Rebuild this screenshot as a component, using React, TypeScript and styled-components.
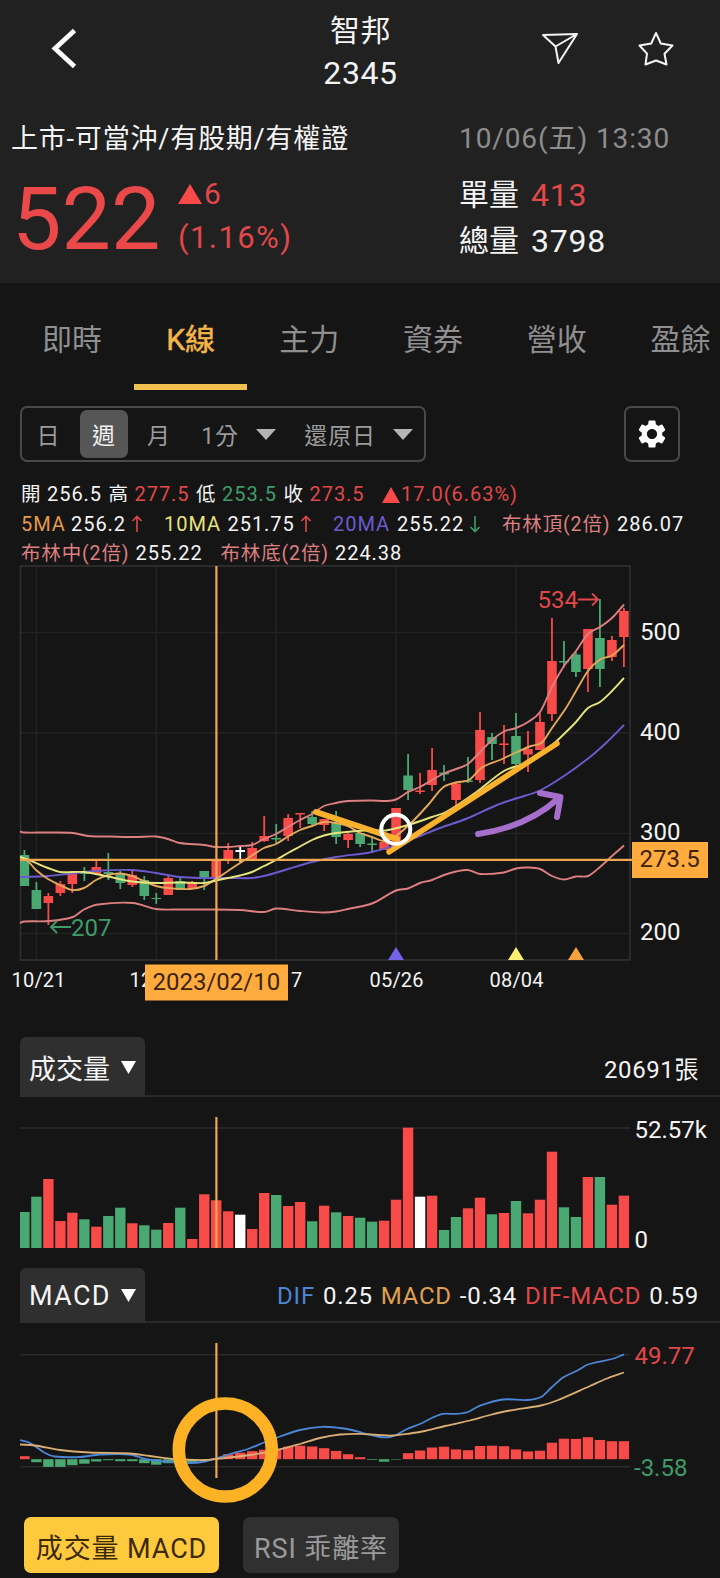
import React from "react";
import styled, { createGlobalStyle } from "styled-components";
import { MdSettings } from "react-icons/md";

const RED = "#f84a48";
const RED_TEXT = "#e0484a";
const GREEN = "#4aa873";
const GREEN_TEXT = "#3f9b68";
const ORANGE = "#efa850";
const PINK = "#dd7f80";
const YELLOW = "#e6e47c";
const PURPLE = "#6c5bd0";
const BLUE = "#4c86d6";
const WHITE = "#f4f4f4";

const GlobalStyle = createGlobalStyle`
  * { box-sizing: border-box; }
  body {
    margin: 0;
    background: #151515;
    color: ${WHITE};
    font-family: Roboto, "Noto Sans CJK TC", sans-serif;
  }
  svg { display: block; flex: none; }
`;

const Screen = styled.div`
  width: 720px;
  height: 1578px;
  overflow: hidden;
  background: #151515;
`;

const Header = styled.header`
  height: 283px;
  background: #212121;
`;

const TitleBar = styled.div`
  display: grid;
  grid-template-columns: 1fr auto 1fr;
  align-items: start;
  height: 118px;
  padding: 9px 45px 0 50px;
`;

const BackButton = styled.div`
  padding-top: 19px;
`;

const Title = styled.h1`
  margin: 0 4px 0 0;
  font-size: 30px;
  font-weight: 400;
  line-height: 43px;
  letter-spacing: 0.6px;
  text-align: center;
`;

const TitleCode = styled.div`
  font-size: 32px;
  letter-spacing: 0.6px;
`;

const Actions = styled.div`
  display: flex;
  justify-content: flex-end;
  gap: 56px;
  padding-top: 20px;
`;

const Quote = styled.div`
  display: grid;
  grid-template-columns: 448px 1fr;
  padding-left: 11px;
`;

const Market = styled.div`
  font-size: 27px;
  line-height: 42px;
  letter-spacing: 0.8px;
`;

const Stamp = styled(Market)`
  color: #8d8d8d;
  font-size: 28px;
  letter-spacing: 0.9px;
`;

const PriceRow = styled.div`
  display: flex;
  gap: 22px;
  padding: 11px 0 0 1px;
`;

const Price = styled.div`
  width: 144px;
  color: #ea4849;
  font-size: 88px;
  line-height: 95px;
`;

const Stack = styled.div<{ $color?: string }>`
  display: flex;
  flex-direction: column;
  color: ${(p) => p.$color ?? WHITE};
  font-size: 30px;
  line-height: 46px;
`;

const Line = styled.div<{ $spacing?: number; $size?: number; $height?: number }>`
  display: flex;
  align-items: center;
  gap: 2px;
  height: ${(p) => p.$height ?? 46}px;
  font-size: ${(p) => p.$size ?? 30}px;
  letter-spacing: ${(p) => p.$spacing ?? 0}px;
`;

const Volumes = styled(Stack)`
  padding-top: 11.5px;
`;

const Figure = styled.span<{ $color?: string }>`
  margin-left: 10px;
  color: ${(p) => p.$color ?? WHITE};
  font-size: 32px;
  letter-spacing: 0.8px;
`;

const Tabs = styled.nav`
  display: flex;
  height: 107px;
  padding-left: 10px;
`;

const Tab = styled.div<{ $active?: boolean }>`
  flex: none;
  width: ${(p) => (p.$active ? 113.5 : 123.8)}px;
  border-bottom: ${(p) => (p.$active ? "6px solid #f2c04e" : "6px solid transparent")};
  color: ${(p) => (p.$active ? "#f4b548" : "#8f8f8f")};
  -webkit-text-stroke: ${(p) => (p.$active ? "0.5px #f4b548" : "0")};
  font-size: 30px;
  line-height: 114px;
  text-align: center;
  white-space: nowrap;
`;

const Toolbar = styled.div`
  display: flex;
  justify-content: space-between;
  padding: 16px 40px 0 20px;
`;

const Frame = styled.div<{ $width: number }>`
  display: flex;
  align-items: center;
  width: ${(p) => p.$width}px;
  height: 56px;
  border: 2px solid #494949;
  border-radius: 7px;
`;

const IconFrame = styled(Frame)`
  justify-content: center;
  color: white;
`;

const Period = styled.div<{ $width: number; $active?: boolean; $end?: boolean; $nudge?: number }>`
  display: flex;
  align-items: center;
  justify-content: ${(p) => (p.$end ? "flex-end" : "center")};
  gap: 17px;
  width: ${(p) => p.$width}px;
  height: 48px;
  padding-right: ${(p) => p.$nudge ?? 0}px;
  border-radius: 7px;
  background: ${(p) => (p.$active ? "#565656" : "transparent")};
  color: ${(p) => (p.$active ? "#f0f0f0" : "#9b9b9b")};
  font-size: 23px;
  letter-spacing: 0.9px;
`;

const Legend = styled.div`
  height: 86px;
  margin: 17px 0 0 21px;
  padding-top: 1px;
  font-size: 20px;
  letter-spacing: 0.8px;
`;

const LegendRow = styled.div`
  display: flex;
  align-items: center;
  height: 29.4px;
  line-height: 29px;
  white-space: nowrap;
`;

const Item = styled.span<{ $color?: string; $width: number; $cjk?: boolean }>`
  display: flex;
  align-items: center;
  flex: none;
  gap: 1px;
  width: ${(p) => p.$width}px;
  color: ${(p) => p.$color ?? WHITE};
  font-size: ${(p) => (p.$cjk ? 19.5 : 20)}px;
  letter-spacing: ${(p) => (p.$cjk ? 0.85 : 0.95)}px;
`;

const PanelHeader = styled.div<{ $height: number; $top?: number }>`
  display: flex;
  justify-content: space-between;
  height: ${(p) => p.$height}px;
  margin-top: ${(p) => p.$top ?? 0}px;
  margin-left: 20px;
  padding-right: 21px;
  border-bottom: 2px solid #2a2a2a;
`;

const PanelTab = styled.div<{ $spacing?: number }>`
  display: flex;
  align-items: center;
  justify-content: space-between;
  width: 125px;
  padding: 0 9px;
  margin-bottom: -2px;
  border-radius: 6px 6px 0 0;
  background: #2f2f2f;
  font-size: 27px;
  letter-spacing: ${(p) => p.$spacing ?? 0}px;
`;

const Readout = styled.div<{ $spacing: number }>`
  display: flex;
  align-items: center;
  gap: 8px;
  padding-top: 2px;
  font-size: 24px;
  letter-spacing: ${(p) => p.$spacing}px;
`;

const Tint = styled.span<{ $color: string }>`
  color: ${(p) => p.$color};
`;

const ChartText = styled.text<{ $color?: string }>`
  font-family: Roboto, sans-serif;
  font-size: 24px;
  fill: ${(p) => p.$color ?? WHITE};
`;

const DateText = styled(ChartText)`
  font-size: 20px;
  letter-spacing: 0.2px;
`;

const Footer = styled.div`
  display: flex;
  gap: 24px;
  padding: 14px 0 0 24px;
`;

const Preset = styled.div<{ $width: number; $active?: boolean }>`
  display: flex;
  align-items: center;
  justify-content: center;
  width: ${(p) => p.$width}px;
  height: 56px;
  padding: 2px 0 0;
  border-radius: 7px;
  background: ${(p) => (p.$active ? "#ffc93d" : "#303030")};
  color: ${(p) => (p.$active ? "#3a2a08" : "#9a9a9a")};
  font-size: 27px;
  letter-spacing: 0.9px;
  white-space: nowrap;
`;

const Triangle = ({ w, h, color, up }: { w: number; h: number; color: string; up?: boolean }) => (
  <svg width={w} height={h} viewBox="0 0 10 10" preserveAspectRatio="none">
    <polygon points={up ? "5,0 10,10 0,10" : "0,0 10,0 5,10"} fill={color} />
  </svg>
);

const Trend = ({ down }: { down?: boolean }) => (
  <svg width="12" height="18" viewBox="0 0 12 18" fill="none" stroke={down ? GREEN_TEXT : RED_TEXT} strokeWidth="1.6">
    <path d={down ? "M6 1V16M1.5 12L6 16.5L10.5 12" : "M6 17V2M1.5 6L6 1.5L10.5 6"} />
  </svg>
);

// [colour, high, low, body top, body bottom] for each week, on the chart's own scale
type Candle = [string, number, number, number, number];
const candles: Candle[] = [
  ["g", 850, 886, 855, 886], ["g", 882, 909, 890, 909], ["r", 893, 925, 896, 903],
  ["r", 881, 896, 884, 893], ["r", 873, 893, 873, 884], ["g", 867, 881, 872, 874],
  ["r", 861, 874, 867, 874], ["g", 853, 880, 872, 874], ["g", 871, 889, 873, 883],
  ["r", 870, 887, 875, 885], ["g", 876, 900, 880, 896], ["g", 893, 904, 898, 899],
  ["r", 875, 895, 878, 895], ["g", 877, 890, 881, 890], ["r", 881, 888, 882, 888],
  ["g", 871, 890, 871, 878], ["r", 859, 878, 859, 878], ["r", 843, 864, 850, 860],
  ["w", 846, 862, 850, 852], ["r", 842, 859, 848, 859], ["r", 816, 842, 836, 841],
  ["g", 824, 843, 838, 839.5], ["r", 814, 841, 818, 836], ["r", 813, 828, 813, 814.5],
  ["g", 811, 827, 817, 824], ["r", 819, 831, 819, 825], ["g", 811, 844, 823, 837],
  ["r", 833, 848, 834, 840], ["g", 833, 847, 833, 844], ["g", 838, 853, 843.5, 845],
  ["r", 842, 850, 842, 850], ["r", 808, 842, 808, 842], ["g", 754, 800, 775.5, 790],
  ["r", 773, 794, 790.5, 792], ["r", 748, 791, 770, 785], ["g", 765, 781, 772.5, 774.5],
  ["r", 783, 805, 783.5, 800], ["g", 757, 783, 780.5, 782], ["r", 712, 783, 730, 780],
  ["g", 733, 760, 737, 744], ["r", 725, 764, 743.5, 745], ["g", 713, 765, 736, 764],
  ["r", 731, 772, 749, 754.5], ["r", 713, 750, 722, 750], ["r", 618, 721, 661, 714],
  ["g", 641, 667, 661, 662.5], ["g", 652, 677, 654.5, 672], ["r", 629, 692, 629, 669],
  ["g", 599, 687, 638, 669], ["r", 636, 661, 640, 657], ["r", 608, 667, 611, 637],
];

const volumes = [
  36, 51.3, 69, 27, 35.3, 28.7, 21.3, 32, 40.3, 24.7, 22.7, 18.3, 25, 40.3, 9, 53.7, 47.7, 36.7, 33.3, 19, 55, 53,
  42, 46, 26.7, 42.3, 35.7, 32, 30.3, 26.3, 27.3, 48.3, 120.3, 51.3, 52.3, 18, 31, 39.7, 50.3, 33.7, 35, 47, 34.7,
  48.3, 96.3, 40.7, 31, 71, 71, 43.3, 52.3,
];
const volumeTones = "ggrrrgrggrggrgrrrrwrrgrrgrgrggrrrwrggrrgrgrrrggrgrr";

const histogram = [
  3, -3, -7.7, -7.7, -6, -4.5, -2.3, -1, -2, -2, -4, -5.5, -4, -3.5, -3, -1, 1, 5, 6.5, 8, 9.5, 10.5, 12.5, 13.5,
  12.7, 11, 8.3, 5, 2, -0.7, -2.5, -0.5, 6, 8.7, 11.7, 12.5, 9.8, 9, 13.2, 13.5, 13, 9.8, 7.8, 8.5, 16.5, 20.5, 20.3,
  22, 19.2, 18, 18,
];

const tone: Record<string, string> = { r: RED, g: GREEN, w: "#ffffff" };
const cx = (i: number) => 24.4 + i * 11.99;

type Point = [number, number];
const smooth = (pts: Point[]) => {
  let d = `M${pts[0][0]} ${pts[0][1]}`;
  for (let i = 0; i < pts.length - 1; i++) {
    const a = pts[i - 1] ?? pts[i];
    const b = pts[i];
    const c = pts[i + 1];
    const e = pts[i + 2] ?? c;
    const k = (c[0] - b[0]) / 3;
    const sb = (c[1] - a[1]) / (c[0] - a[0]);
    const sc = (e[1] - b[1]) / (e[0] - b[0]);
    d += `C${b[0] + k} ${b[1] + k * sb} ${c[0] - k} ${c[1] - k * sc} ${c[0]} ${c[1]}`;
  }
  return d;
};

const upperBand: Point[] = [
  [20, 831.5], [24, 832.5], [48, 832.5], [73, 833], [88, 836], [110, 836.5], [135, 837], [156, 836.5], [168, 839], [180, 843],
  [204, 845], [216, 847], [228, 847], [240, 846], [252, 845], [264, 839], [276, 834], [288, 827], [300, 820], [312, 814],
  [324, 806], [336, 803], [348, 801], [372, 800.5], [386, 801], [396, 799.5], [408, 792], [420, 787], [432, 780],
  [444, 773.5], [456, 769], [468, 764], [480, 752], [492, 740], [504, 731.5], [516, 728], [528, 722], [540, 712],
  [552, 687], [564, 666], [576, 651], [588, 634], [600, 627], [612, 618], [624, 604.5],
];
const lowerBand: Point[] = [
  [20, 923], [24, 921.5], [50, 921], [73, 917], [84, 909.5], [98, 904.5], [133, 903], [156, 909], [180, 909.5], [204, 909.5],
  [240, 910], [264, 912], [276, 908.5], [300, 911], [324, 912.5], [336, 911.5], [348, 909], [372, 903.5], [396, 890.5],
  [408, 888.5], [420, 883], [432, 880], [444, 875], [456, 871.5], [468, 870], [480, 874], [504, 872.5], [516, 868.5],
  [528, 867.5], [540, 869], [552, 876], [564, 879.5], [576, 876.5], [588, 876], [600, 867], [612, 856], [624, 845.5],
];
const ma5: Point[] = [
  [20, 857], [27, 860], [36, 870], [48, 879], [60, 885], [72, 890], [84, 888], [96, 880], [108, 875], [120, 873.5],
  [132, 876], [144, 881], [156, 886], [168, 888], [190, 889], [204, 886], [216, 879], [228, 871], [240, 863], [252, 855.5],
  [264, 848], [276, 844], [288, 836.5], [300, 830], [312, 826], [324, 822], [336, 823], [348, 826], [360, 833],
  [372, 837], [384, 841], [396, 836], [413, 821], [428, 805], [443, 787.5], [456, 782.5], [469, 780], [482, 767.5],
  [500, 760], [517, 752], [531, 746], [542, 742.5], [552, 728], [566, 708], [576, 691], [588, 671], [600, 659.5],
  [612, 655.5], [624, 645],
];
const ma10: Point[] = [
  [20, 857], [28, 859.5], [36, 863], [48, 868], [60, 872], [84, 872], [108, 876.5], [132, 881.5], [156, 883],
  [180, 882.5], [204, 883], [216, 880.5], [228, 878], [240, 875.5], [252, 872], [264, 866], [276, 860], [288, 853],
  [300, 846.5], [312, 840], [324, 835.5], [336, 833], [372, 830], [386, 830.5], [408, 825], [432, 817], [446, 812],
  [475, 793], [504, 771], [528, 762], [552, 745], [564, 734], [576, 722], [588, 708], [600, 702], [612, 691], [624, 678],
];
const ma20: Point[] = [
  [20, 877], [48, 876], [72, 873.5], [96, 871], [132, 870], [156, 873], [180, 877], [204, 878], [228, 878], [252, 878],
  [268, 875], [288, 869], [312, 862], [336, 857], [372, 852], [396, 845], [420, 836], [440, 828], [467, 818.5], [497, 805],
  [516, 798.5], [540, 790.5], [564, 776], [590, 757], [606, 743], [624, 725],
];
const dif: Point[] = [
  [20, 1440], [30, 1443], [45, 1453], [55, 1456.5], [80, 1457], [100, 1454.5], [130, 1454.5], [145, 1459], [160, 1461],
  [190, 1463], [205, 1461.5], [216, 1458.5], [230, 1454], [248, 1449], [264, 1442.5], [280, 1436.5], [300, 1430], [322, 1426.8],
  [340, 1428], [352, 1430], [363, 1433], [380, 1437], [390, 1437], [398, 1434], [407, 1429], [420, 1424], [433, 1417.5],
  [443, 1413.9], [457, 1413.9], [468, 1412], [480, 1405.7], [503, 1399.5], [527, 1400], [541, 1397], [552, 1387], [563, 1377.5],
  [577, 1370.7], [588, 1364.5], [612, 1359], [624, 1354.3],
];
const macd: Point[] = [
  [20, 1444.5], [35, 1445.5], [60, 1450], [90, 1452.5], [130, 1453.5], [150, 1456], [175, 1459], [205, 1460], [225, 1458],
  [250, 1455], [275, 1450.5], [300, 1444], [320, 1438], [340, 1434.5], [360, 1433.8], [378, 1435], [393, 1435.5],
  [410, 1433.5], [425, 1431], [445, 1426], [470, 1420.5], [490, 1415], [510, 1410.5], [541, 1405.5], [557, 1400.5],
  [590, 1386], [607, 1378.5], [624, 1372.5],
];

const PriceChart = () => (
  <svg width="720" height="440" viewBox="0 565 720 440">
    <g stroke="#232323" strokeWidth="1.5">
      {[632.5, 733, 833.5, 933.5].map((y) => <line key={y} x1="20" x2="630" y1={y} y2={y} />)}
      {[36.4, 156.3, 276.2, 396.1, 516].map((x) => <line key={x} x1={x} x2={x} y1="566" y2="960" />)}
    </g>
    <rect x="20.5" y="566" width="609.5" height="394" fill="none" stroke="#2e2e2e" strokeWidth="1.8" />
    {candles.map(([c, high, low, top, bottom], i) => {
      const left = Math.max(20, cx(i) - 4.8);
      return (
        <g key={i} fill={tone[c]}>
          <rect x={cx(i) - 0.9} y={high} width="1.8" height={low - high} />
          <rect x={left} y={top} width={cx(i) + 4.8 - left} height={bottom - top} />
        </g>
      );
    })}
    <g fill="none" strokeWidth="1.9" strokeLinejoin="round">
      <path d={smooth(upperBand)} stroke={PINK} />
      <path d={smooth(lowerBand)} stroke={PINK} />
      <path d={smooth(ma20)} stroke={PURPLE} />
      <path d={smooth(ma5)} stroke="#e5a95c" />
      <path d={smooth(ma10)} stroke={YELLOW} />
    </g>
    <g stroke={ORANGE} strokeWidth="2.2">
      <line x1="20" x2="632" y1="859.8" y2="859.8" />
      <line x1="216.4" x2="216.4" y1="566" y2="960" />
    </g>
    <polygon points="396,947 404,960 388,960" fill="#7463e6" />
    <polygon points="516,947 524,960 508,960" fill="#fbee70" />
    <polygon points="576,947 584,960 568,960" fill="#f5a33f" />

    <g fill="none" stroke={GREEN_TEXT} strokeWidth="1.8">
      <path d="M51 927H71M57 921L51 927L57 933" />
    </g>
    <ChartText x="71" y="935.5" $color={GREEN_TEXT}>207</ChartText>
    <g fill="none" stroke={RED_TEXT} strokeWidth="1.8">
      <path d="M578 599.5H598M592 593.5L598 599.5L592 605.5" />
    </g>
    <ChartText x="537.5" y="608" $color={RED_TEXT}>534</ChartText>

    <ChartText x="640" y="639.5">500</ChartText>
    <ChartText x="640" y="739.8">400</ChartText>
    <ChartText x="640" y="840">300</ChartText>
    <ChartText x="640" y="940">200</ChartText>
    <rect x="632" y="842" width="76" height="36" fill="#ffab3d" />
    <ChartText x="639.5" y="867.3" $color="#3a2308">273.5</ChartText>

    <DateText x="11.5" y="987">10/21</DateText>
    <DateText x="129.5" y="987">12</DateText>
    <DateText x="291" y="987">7</DateText>
    <DateText x="369.5" y="987">05/26</DateText>
    <DateText x="489.5" y="987">08/04</DateText>
    <rect x="145" y="964.5" width="143" height="36" fill="#ffab3d" />
    <ChartText x="152.5" y="990" $color="#3a2308">2023/02/10</ChartText>

    <g fill="none" strokeLinecap="round" strokeLinejoin="round">
      <path d="M316 812L397 839" stroke="#fab12c" strokeWidth="6" />
      <path d="M389 852L557 743.5" stroke="#fab12c" strokeWidth="5.5" />
      <path d="M478 834C512 829 538 817 559 798" stroke="#a66fcb" strokeWidth="6" />
      <path d="M540 793L560.5 797L557 817" stroke="#a66fcb" strokeWidth="6" />
      <circle cx="395.8" cy="829.3" r="14.5" stroke="#ffffff" strokeWidth="4" />
    </g>
  </svg>
);

const VolumeChart = () => (
  <svg width="720" height="171" viewBox="0 1097 720 171">
    <line x1="20" x2="630" y1="1128" y2="1128" stroke="#2a2a2a" strokeWidth="1.5" />
    {volumes.map((v, i) => {
      const left = Math.max(20, cx(i) - 5.2);
      return <rect key={i} x={left} y={1248 - v} width={cx(i) + 5.2 - left} height={v} fill={tone[volumeTones[i]]} />;
    })}
    <line x1="216.4" x2="216.4" y1="1117" y2="1248" stroke={ORANGE} strokeWidth="2.2" />
    <ChartText x="634.5" y="1137.8">52.57k</ChartText>
    <ChartText x="634.5" y="1247.7">0</ChartText>
  </svg>
);

const MacdChart = () => (
  <svg width="720" height="180" viewBox="0 1323 720 180">
    <g stroke="#2a2a2a" strokeWidth="1.5">
      <line x1="20" x2="630" y1="1354.8" y2="1354.8" />
      <line x1="20" x2="630" y1="1466.8" y2="1466.8" />
    </g>
    {histogram.map((v, i) => {
      const left = Math.max(20, cx(i) - 5.2);
      return (
        <rect key={i} x={left} y={v > 0 ? 1459.2 - v : 1459.2} width={cx(i) + 5.2 - left} height={Math.abs(v)} fill={v > 0 ? RED : GREEN} />
      );
    })}
    <g fill="none" strokeWidth="1.8">
      <path d={smooth(dif)} stroke={BLUE} />
      <path d={smooth(macd)} stroke="#d9ad73" />
    </g>
    <line x1="216.4" x2="216.4" y1="1343" y2="1478" stroke={ORANGE} strokeWidth="2.2" />
    <circle cx="225.3" cy="1450" r="46.5" fill="none" stroke="#fdb124" strokeWidth="12.5" />
    <ChartText x="634.5" y="1363.5" $color={RED_TEXT}>49.77</ChartText>
    <ChartText x="634" y="1475.5" $color={GREEN_TEXT}>-3.58</ChartText>
  </svg>
);

export default function App() {
  return (
    <Screen>
      <GlobalStyle />
      <Header>
        <TitleBar>
          <BackButton>
            <svg width="28" height="42" viewBox="0 0 28 42" fill="none" stroke="#fff" strokeWidth="4.8">
              <path d="M24.5 2.5L5 20.5L24.5 38.5" />
            </svg>
          </BackButton>
          <Title>
            智邦
            <TitleCode>2345</TitleCode>
          </Title>
          <Actions>
            <svg width="40" height="38" viewBox="539 29 40 38" fill="none" stroke="#f4f4f4" strokeWidth="2" strokeLinejoin="round">
              <path d="M543 35L577 34L558.5 63L555.5 46.5ZM555.5 46.5L577 34" />
            </svg>
            <svg width="40" height="38" viewBox="635 29 40 38" fill="none" stroke="#f4f4f4" strokeWidth="2" strokeLinejoin="round">
              <path d="M656 33L660.8 43.5L672.5 45.5L664.5 53.7L666.5 64.5L656 60.5L645.5 64.5L647 53.7L639.5 45.5L651.2 43.5Z" />
            </svg>
          </Actions>
        </TitleBar>
        <Quote>
          <Market>上市-可當沖/有股期/有權證</Market>
          <Stamp>10/06(五) 13:30</Stamp>
          <PriceRow>
            <Price>522</Price>
            <Stack $color={RED_TEXT}>
              <Line><Triangle w={24} h={20} color={RED} up />6</Line>
              <Line $size={31} $spacing={1.4} $height={42}>(1.16%)</Line>
            </Stack>
          </PriceRow>
          <Volumes>
            <Line>單量<Figure $color={RED_TEXT}>413</Figure></Line>
            <Line>總量<Figure>3798</Figure></Line>
          </Volumes>
        </Quote>
      </Header>

      <Tabs>
        <Tab>即時</Tab>
        <Tab $active>K線</Tab>
        <Tab>主力</Tab>
        <Tab>資券</Tab>
        <Tab>營收</Tab>
        <Tab>盈餘</Tab>
      </Tabs>

      <Toolbar>
        <Frame $width={406}>
          <Period $width={58} $nudge={5}>日</Period>
          <Period $width={48} $active>週</Period>
          <Period $width={62}>月</Period>
          <Period $width={86} $end>1分 <Triangle w={20} h={11} color="#b4b4b4" /></Period>
          <Period $width={137} $end>還原日 <Triangle w={20} h={11} color="#b4b4b4" /></Period>
        </Frame>
        <IconFrame $width={56}><MdSettings size={34} /></IconFrame>
      </Toolbar>

      <Legend>
        <LegendRow>
          <Item $width={26} $cjk>開</Item><Item $width={61.5}>256.5</Item>
          <Item $width={26} $cjk>高</Item><Item $width={61.5} $color={RED_TEXT}>277.5</Item>
          <Item $width={26} $cjk>低</Item><Item $width={61.5} $color={GREEN_TEXT}>253.5</Item>
          <Item $width={26} $cjk>收</Item><Item $width={72.5} $color={RED_TEXT}>273.5</Item>
          <Item $width={140} $color={RED_TEXT}><Triangle w={18} h={16} color={RED} up />17.0(6.63%)</Item>
        </LegendRow>
        <LegendRow>
          <Item $width={50} $color="#e39a4b">5MA</Item><Item $width={60}>256.2</Item><Item $width={33}><Trend /></Item>
          <Item $width={63.5} $color={YELLOW}>10MA</Item><Item $width={72}>251.75</Item><Item $width={33.5}><Trend /></Item>
          <Item $width={64} $color={PURPLE}>20MA</Item><Item $width={72}>255.22</Item><Item $width={33}><Trend down /></Item>
          <Item $width={115} $cjk $color={PINK}>布林頂(2倍)</Item><Item $width={70}>286.07</Item>
        </LegendRow>
        <LegendRow>
          <Item $width={114.5} $cjk $color={PINK}>布林中(2倍)</Item><Item $width={85}>255.22</Item>
          <Item $width={114.5} $cjk $color={PINK}>布林底(2倍)</Item><Item $width={85}>224.38</Item>
        </LegendRow>
      </Legend>

      <PriceChart />

      <div>
        <PanelHeader $height={60} $top={32}>
          <PanelTab>成交量 <Triangle w={15} h={13} color="#fff" /></PanelTab>
          <Readout $spacing={0.6}>20691張</Readout>
        </PanelHeader>
        <VolumeChart />
      </div>

      <div>
        <PanelHeader $height={55}>
          <PanelTab $spacing={1.3}>MACD <Triangle w={15} h={13} color="#fff" /></PanelTab>
          <Readout $spacing={0.75}>
            <Tint $color={BLUE}>DIF</Tint>0.25
            <Tint $color="#e0a052">MACD</Tint>-0.34
            <Tint $color={RED_TEXT}>DIF-MACD</Tint>0.59
          </Readout>
        </PanelHeader>
        <MacdChart />
      </div>

      <Footer>
        <Preset $width={195} $active>成交量 MACD</Preset>
        <Preset $width={156}>RSI 乖離率</Preset>
      </Footer>
    </Screen>
  );
}
